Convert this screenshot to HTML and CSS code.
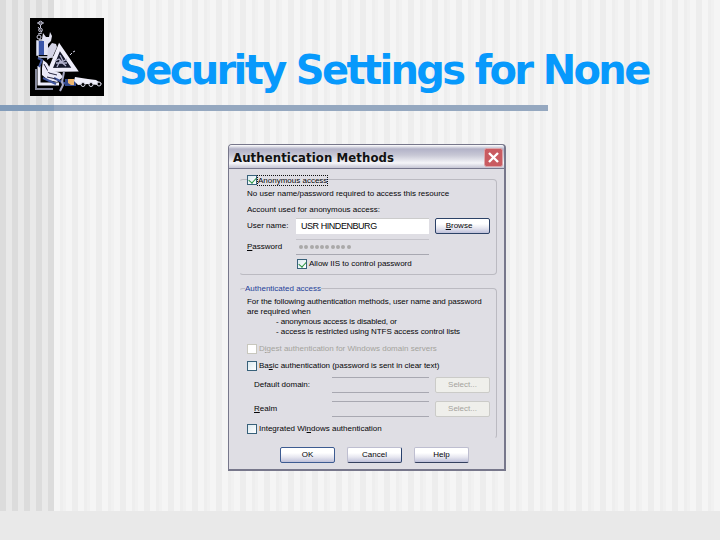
FILE: index.html
```html
<!DOCTYPE html>
<html lang="en">
<head>
    <meta charset="UTF-8">
    <title>Security Settings for None</title>
    <link rel="stylesheet" href="styles.css">
</head>
<body>
    <div class="slide">
        <header class="header">
            <svg class="logo" width="74" height="78" viewBox="0 0 74 78">
                <rect width="74" height="78" fill="#000"/>
                <!-- chain and wrench -->
                <g fill="none" stroke="#c8c8dc" stroke-width="1">
                    <circle cx="10.500" cy="5" r="1.800"/><circle cx="10.500" cy="12" r="1.800"/><circle cx="9" cy="19" r="2"/>
                    <path d="M7 5h7M10.500 7v3M8 9l4 5M8 16l4-1"/>
                </g>
                <path d="M13 15l3 4h3l1-5 2 4-1 5-3 3v11h-5V25l-1-4z" fill="#e2e2f2"/>
                <path d="M7 23h7v14H7z" fill="#3a55a8"/>
                <path d="M7 23h1v14h-1zM9 22h5M8 39h17" stroke="#dfe2f4" fill="#dfe2f4" stroke-width="1.500"/>
                <path d="M18 30l4-5 4 1 1 3-4 9-6 4z" fill="#d3d3e6"/>
                <!-- base -->
                <path d="M6 51v20h17" fill="none" stroke="#85889c" stroke-width="2"/>
                <path d="M9 48v18h20" fill="none" stroke="#ededfa" stroke-width="3"/>
                <path d="M12 50l1-8 4 3 4 7 9 3 3 4-6 5-9-2-6-5z" fill="#e9e8f7"/>
                <path d="M8 40l4 2-3 7M13 60l13 6M24 60l14 7" fill="none" stroke="#3f559d" stroke-width="2"/>
                <path d="M14 46l5 9 8 2M17 59l9 2" fill="none" stroke="#292941"/>
                <!-- triangle -->
                <path d="M29.500 29L20 52L45 51.500z" fill="#15182b" stroke="#eeedfa" stroke-width="4"/>
                <path d="M25 43l4-2 3 3 5-3M27 49l3-6 6 5M30 37l3 6M26 45h11" fill="none" stroke="#b3b3cf" stroke-width="1.300"/>
                <path d="M40 37l2-2M43 34l2-1" stroke="#d5d5e7"/>
                <!-- tools -->
                <path d="M34 54l-2 10 1 3-3 6" fill="none" stroke="#a9aac5" stroke-width="2"/>
                <path d="M35 61h11v7H35z" fill="#33498d"/>
                <path d="M38 61h6v6h-3l-3-2z" fill="#edb66f"/>
                <path d="M45 59l13 2 8 1 6 4-4 1-10-1-10 1-4-4z" fill="#f0effa"/>
                <g fill="#000" stroke="#d9d9e8"><circle cx="53" cy="66.500" r="2"/><circle cx="61" cy="66.500" r="2"/><circle cx="69" cy="66" r="2"/></g>
            </svg>
            <h1 class="title">Security Settings for None</h1>
        </header>
        <div class="rule"></div>

        <main class="dialog">
            <div class="titlebar">
                <span>Authentication Methods</span>
                <svg class="close" width="19" height="19" viewBox="0 0 19 19">
                    <rect x=".5" y=".5" width="18" height="18" rx="2" fill="#c95b61" stroke="#dda5aa"/>
                    <path d="M5 5l9 9M14 5l-9 9" stroke="#fff" stroke-width="2.400"/>
                </svg>
            </div>

            <section class="group anonymous">
                <div class="legend check"><i class="box on"></i><span class="focus">Anonymous access</span></div>
                <p class="line required">No user name/password required to access this resource</p>
                <p class="line account">Account used for anonymous access:</p>
                <div class="row user">
                    <label>User name:</label>
                    <div class="field filled">USR HINDENBURG</div>
                    <button class="btn browse"><u>B</u>rowse</button>
                </div>
                <div class="row pass">
                    <label><u>P</u>assword</label>
                    <div class="field dots"><i></i><i></i><i></i><i></i><i></i><i></i><i></i><i></i><i></i><i></i></div>
                </div>
                <div class="check allow"><i class="box on"></i><span>Allow IIS to control password</span></div>
            </section>

            <section class="group authenticated">
                <div class="legend blue"><span>Authenticated access</span></div>
                <div class="notes">
                    <p>For the following authentication methods, user name and password</p>
                    <p>are required when</p>
                    <p class="item first">- anonymous access is disabled, or</p>
                    <p class="item">- access is restricted using NTFS access control lists</p>
                </div>
                <div class="check digest"><i class="box"></i><span>D<u>i</u>gest authentication for Windows domain servers</span></div>
                <div class="check basic"><i class="box"></i><span>Ba<u>s</u>ic authentication (password is sent in clear text)</span></div>
                <div class="row domain">
                    <label>Default domain:</label>
                    <div class="field"></div>
                    <button class="btn disabled">Select...</button>
                </div>
                <div class="row domain realm">
                    <label><u>R</u>ealm</label>
                    <div class="field"></div>
                    <button class="btn disabled">Select...</button>
                </div>
                <div class="check integrated"><i class="box"></i><span>Integrated Wi<u>n</u>dows authentication</span></div>
            </section>

            <div class="actions">
                <button class="btn ok">OK</button>
                <button class="btn cancel">Cancel</button>
                <button class="btn">Help</button>
            </div>
        </main>
        <footer class="footer"></footer>
    </div>
</body>
</html>
```
FILE: styles.css
```css
* {
    box-sizing: border-box;
}
body {
    margin: 0;
    font-family: "Liberation Sans", Arial, sans-serif;
}
p, h1 {
    margin: 0;
}
.slide {
    display: flex;
    flex-direction: column;
    width: 720px;
    height: 540px;
    overflow: hidden;
    background:
        repeating-linear-gradient(90deg, #dcdcdc 0 6px, #e9e9e9 6px 12px) 0 0 / 54px 100% no-repeat,
        repeating-linear-gradient(90deg, #ededed 0 6px, #f5f5f5 6px 12px, #eeeeee 12px 15px, #f1f1f1 15px 18px, #f5f5f5 18px 24px);
}
.header {
    display: flex;
    height: 106px;
    padding: 18px 0 0 30px;
}
.logo {
    flex: none;
}
.title {
    margin-left: 15px;
    padding-top: 28px;
    font: bold 40px/48px "DejaVu Sans", sans-serif;
    letter-spacing: -2.65px;
    white-space: nowrap;
    color: #0799fc;
}
.rule {
    width: 548px;
    height: 6px;
    margin-top: -1px;
    background: linear-gradient(90deg, #829cba 54px, #95a8c0 54px);
    flex: none;
}
.dialog {
    width: 278px;
    height: 327px;
    margin: 33px 0 0 228px;
    flex: none;
    background: #dfdee4;
    border: 1px solid #77778b;
    border-bottom-width: 2px;
    border-right-width: 2px;
    border-radius: 4px 4px 0 0;
    font-size: 8px;
    line-height: 10px;
    color: #050507;
    white-space: nowrap;
}
.titlebar {
    display: flex;
    justify-content: space-between;
    height: 24px;
    padding: 2px 1px 0 4px;
    border-bottom: 1px solid #77778d;
    border-radius: 3px 3px 0 0;
    background: linear-gradient(#fff 0, #b3b3c8 4px, #c7c7d5 10px, #f5f5f9 18px, #c5c5d4);
    font: bold 13px/22px "DejaVu Sans Condensed", "DejaVu Sans", sans-serif;
    font-stretch: condensed;
    letter-spacing: .1px;
    color: #111;
}
.close {
    margin-top: 1px;
}
.group {
    width: 258px;
    margin-left: 10px;
    padding-left: 7px;
    border: 1px solid #bbbac1;
    border-left-color: transparent;
    border-radius: 4px;
}
.anonymous {
    height: 96px;
    margin-top: 10px;
}
.legend {
    display: flex;
    width: max-content;
    height: 10px;
    margin-top: -5px;
    background: #dfdee4;
}
.check {
    display: flex;
    align-items: center;
    height: 10px;
}
.box {
    position: relative;
    flex: none;
    width: 10px;
    height: 10px;
    margin-right: 2px;
    border: 1px solid #38617a;
    background: linear-gradient(135deg, #dceaf0, #fff);
}
.box.on::after {
    content: "";
    position: absolute;
    left: 2px;
    top: 0;
    width: 4px;
    height: 6px;
    border: solid #299340;
    border-width: 0 1.5px 1.5px 0;
    transform: rotate(42deg);
}
.legend .box {
    margin-right: 0;
}
.focus {
    height: 11px;
    border: 1px dotted #111;
}
.line {
    height: 10px;
}
.required {
    margin-top: 4px;
}
.account {
    margin-top: 6px;
}
.row {
    display: flex;
    align-items: center;
    height: 16px;
}
.row label {
    width: 49px;
}
.field {
    width: 133px;
    height: 16px;
    padding-left: 5px;
    border-top: 1px solid #a8a8b1;
    border-bottom: 1px solid #a8a8b1;
    line-height: 14px;
}
.filled {
    background: #fff;
    border-color: #ccc #fff #fff;
    font-size: 9px;
    letter-spacing: -.45px;
}
.user {
    margin-top: 3px;
}
.pass {
    margin-top: 5px;
}
.pass .field {
    border-top-color: #c5c4cb;
}
.dots {
    display: flex;
    align-items: center;
    gap: 1.3px;
    padding-left: 3px;
}
.dots i {
    width: 4px;
    height: 4px;
    border-radius: 50%;
    background: #aaa9a9;
}
.allow {
    margin: 4px 0 0 50px;
}
.btn {
    width: 55px;
    height: 16px;
    padding: 0;
    border: 1px solid #2c4267;
    border-radius: 2px;
    background: linear-gradient(#fff 35%, #e7e7f0 65%, #bfc1da);
    font: 8px/12px "Liberation Sans", Arial, sans-serif;
    color: #050507;
}
.browse {
    margin-left: 6px;
    padding-right: 7px;
}
.btn.disabled {
    margin-left: 6px;
    border-color: #cbcbc8;
    background: #efefeb;
    color: #a4a39c;
}
.authenticated {
    height: 151px;
    margin-top: 13px;
    border-bottom-color: transparent;
}
.blue {
    margin-left: -2px;
    color: #243f99;
}
.notes {
    margin-top: 3px;
    letter-spacing: -.05px;
}
.item {
    padding-left: 29px;
}
.first {
    letter-spacing: -.12px;
}
.digest {
    margin-top: 7px;
    color: #a4a39c;
}
.digest .box {
    border-color: #c8c7bd;
    background: #fff;
}
.basic {
    margin-top: 7px;
    letter-spacing: -.03px;
}
.domain {
    margin-top: 6px;
}
.domain label {
    width: 85px;
    padding-left: 7px;
}
.domain .field {
    width: 97px;
}
.realm {
    margin-top: 8px;
}
.integrated {
    margin-top: 7px;
}
.actions {
    display: flex;
    gap: 12px;
    margin: 8px 0 0 51px;
}
.actions .btn {
    border-color: #bebed0 #bebed0 #34405f;
}
.actions .ok {
    border-color: #3d5b91;
}
.actions .cancel {
    border-right-color: #28416d;
}
.footer {
    height: 29px;
    margin-top: auto;
    background: #e9e9e9;
}
```
